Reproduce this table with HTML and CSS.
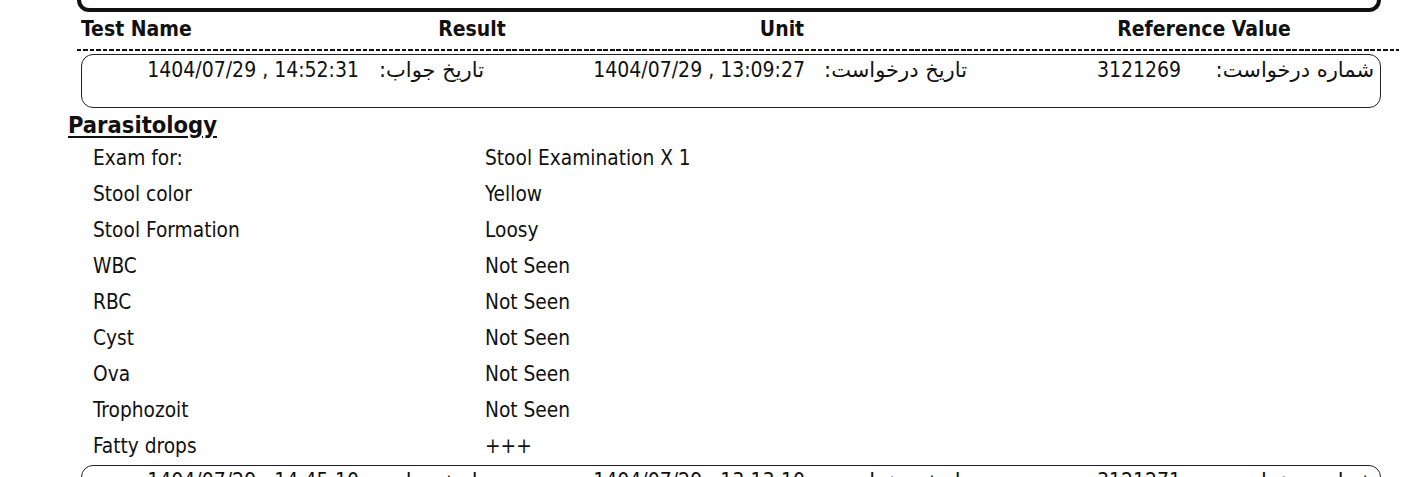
FILE: index.html
```html
<!DOCTYPE html>
<html lang="en">
<head>
<meta charset="utf-8">
<title>Lab Report</title>
<link rel="stylesheet" href="styles.css">
</head>
<body>
<div class="page">
  <div class="top-frame"></div>

  <div class="col-head">
    <div class="ch ch-name">Test Name</div>
    <div class="ch ch-result">Result</div>
    <div class="ch ch-unit">Unit</div>
    <div class="ch ch-ref">Reference Value</div>
  </div>

  <div class="dash-rule"></div>

  <div class="info-box" dir="rtl">
    <div class="ib-label">شماره درخواست:</div>
    <div class="ib-val">3121269</div>
    <div class="ib-label">تاریخ درخواست:</div>
    <div class="ib-val">1404/07/29 , 13:09:27</div>
    <div class="ib-label">تاریخ جواب:</div>
    <div class="ib-val">1404/07/29 , 14:52:31</div>
  </div>

  <div class="section-title">Parasitology</div>

  <div class="results">
    <div class="r-row"><div class="r-name">Exam for:</div><div class="r-val">Stool Examination X 1</div></div>
    <div class="r-row"><div class="r-name">Stool color</div><div class="r-val">Yellow</div></div>
    <div class="r-row"><div class="r-name">Stool Formation</div><div class="r-val">Loosy</div></div>
    <div class="r-row"><div class="r-name">WBC</div><div class="r-val">Not Seen</div></div>
    <div class="r-row"><div class="r-name">RBC</div><div class="r-val">Not Seen</div></div>
    <div class="r-row"><div class="r-name">Cyst</div><div class="r-val">Not Seen</div></div>
    <div class="r-row"><div class="r-name">Ova</div><div class="r-val">Not Seen</div></div>
    <div class="r-row"><div class="r-name">Trophozoit</div><div class="r-val">Not Seen</div></div>
    <div class="r-row"><div class="r-name">Fatty drops</div><div class="r-val">+++</div></div>
  </div>

  <div class="info-box info-next" dir="rtl">
    <div class="ib-label">شماره درخواست:</div>
    <div class="ib-val">3121271</div>
    <div class="ib-label">تاریخ درخواست:</div>
    <div class="ib-val">1404/07/29 , 13:13:10</div>
    <div class="ib-label">تاریخ جواب:</div>
    <div class="ib-val">1404/07/29 , 14:45:10</div>
  </div>
</div>
</body>
</html>
```
FILE: styles.css
```css
html, body {
  margin: 0;
  padding: 0;
  background: #fff;
}

body {
  font-family: "DejaVu Sans Condensed", "DejaVu Sans", sans-serif;
  color: #111;
  overflow: hidden;
}

.page {
  width: 1423px;
  height: 477px;
  overflow: hidden;
}

.top-frame {
  margin-left: 77px;
  width: 1296px;
  height: 8px;
  border: 4px solid #111;
  border-top: none;
  border-radius: 0 0 14px 14px;
}

.col-head {
  display: grid;
  grid-template-columns: 259px 264px 356px 68px 352px;
  margin-left: 81px;
  padding-top: 1px;
  font-weight: 700;
  font-size: 21px;
  line-height: 32px;
}

.ch-result, .ch-unit, .ch-ref {
  text-align: center;
}

.ch-ref {
  grid-column: 5;
}

.dash-rule {
  margin: 4px 0 0 77px;
  width: 1322px;
  height: 2px;
  background: repeating-linear-gradient(to right, #111 0 4.5px, transparent 4.5px 6.5px);
}

.info-box {
  display: grid;
  grid-template-columns: 193px 214px 162px 321px 125px 1fr;
  margin: 3px 0 0 81px;
  width: 1292px;
  height: 50px;
  padding: 2px 6px 0 0;
  border: 1.5px solid #222;
  border-radius: 12px;
  font-size: 21px;
  line-height: 26px;
}

.ib-label {
  font-family: "DejaVu Sans", sans-serif;
  font-size: 21px;
  text-align: right;
}

.ib-val {
  direction: ltr;
  text-align: right;
}

.section-title {
  margin: 3px 0 0 68px;
  font-weight: 700;
  font-size: 23.5px;
  line-height: 28px;
  text-decoration: underline;
  text-decoration-thickness: 2px;
  text-underline-offset: 3px;
}

.results {
  padding: 1px 0 1px 93px;
}

.r-row {
  display: grid;
  grid-template-columns: 392px 1fr;
  font-size: 20.7px;
  line-height: 36px;
  height: 36px;
}

.info-next {
  margin-top: 0;
}
```
